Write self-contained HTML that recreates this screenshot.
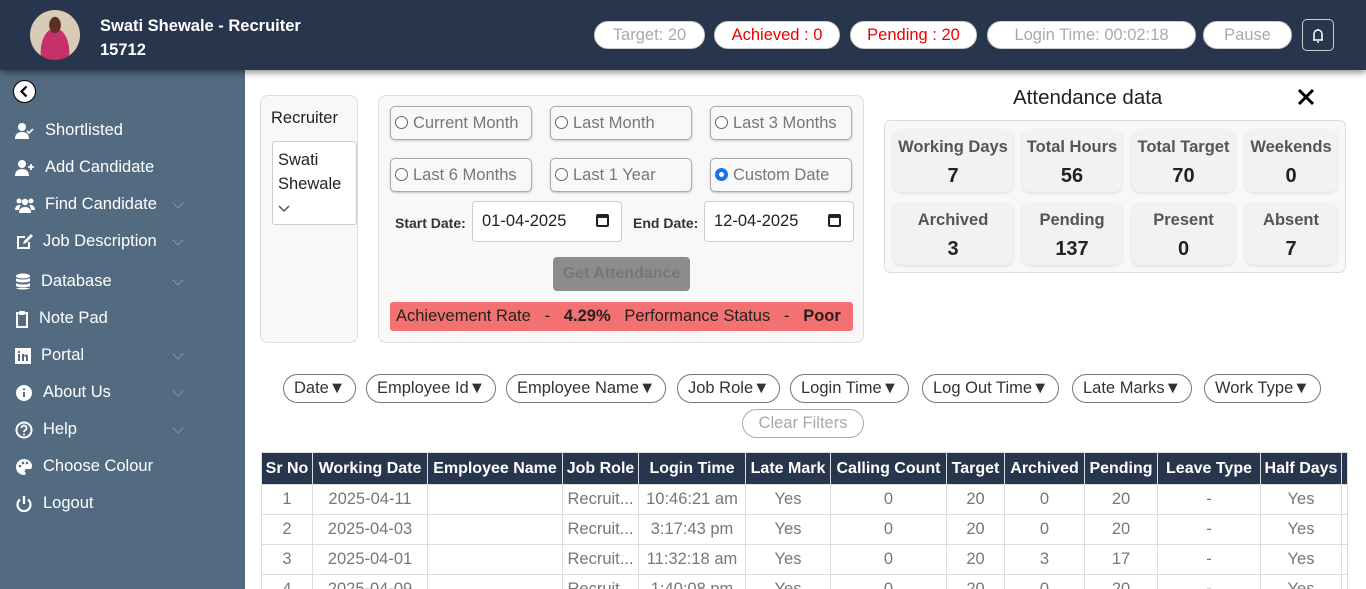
<!DOCTYPE html><html><head><style>
*{box-sizing:border-box;margin:0;padding:0}
html,body{width:1366px;height:589px;overflow:hidden}
body{font-family:"Liberation Sans",sans-serif;background:#fff;position:relative}
.a{position:absolute}
.hdr{left:0;top:0;width:1366px;height:70px;background:#28364d;box-shadow:0 3px 6px rgba(0,0,0,.4);z-index:2}
.pill{position:absolute;top:21px;height:28px;border-radius:14px;background:#fff;border:1px solid #ccc;font-size:16.5px;text-align:center;line-height:26px;color:#aaa}
.side{left:0;top:70px;width:245px;height:519px;background:#526b80}
.mi{position:absolute;left:15px;color:#fff;font-size:16.5px;display:flex;align-items:center;gap:10px}
.mi svg{width:20px;height:18px;fill:#fff}
.chev{position:absolute;left:174px;width:8px;height:8px;border-right:1.5px solid #8195a8;border-bottom:1.5px solid #8195a8;transform:rotate(45deg)}
.box{background:#f8f8f8;border:1px solid #ddd;border-radius:8px}
.rb{position:absolute;width:142px;height:34px;border:1px solid #aaa;border-radius:5px;background:#f8f8f8;font-size:16.5px;color:#777;line-height:32px;padding-left:4px;box-shadow:0 1px 2px rgba(0,0,0,.2)}
.rb span{display:inline-block;width:13px;height:13px;border:1px solid #666;border-radius:50%;vertical-align:-1px;margin-right:5px;background:#fff}
.card{position:absolute;width:120px;height:62px;background:#f1f2f4;border-radius:8px;box-shadow:0 1px 3px rgba(0,0,0,.12);text-align:center;font-weight:bold}
.card b{display:block;font-size:16.5px;color:#555;margin-top:8px}
.card em{display:block;font-style:normal;font-size:20px;color:#222;margin-top:8px}
.f{position:absolute;top:374px;height:29px;border:1px solid #777;border-radius:15px;font-size:16.5px;line-height:27px;padding:0 10px;color:#333}
table{position:absolute;left:261px;top:452px;border-collapse:collapse;font-size:16.5px}
th{background:#28364d;color:#fff;height:32px;border:1px solid #ddd;font-weight:bold;padding:0 3px;white-space:nowrap;font-size:16px}
td{height:30px;border:1px solid #ddd;text-align:center;color:#777;white-space:nowrap}
</style></head><body>
<div class="a hdr">
 <div class="a" style="left:30px;top:10px;width:50px;height:50px;border-radius:50%;background:radial-gradient(ellipse at 50% 30%,#5a3024 0 16%,transparent 17%),radial-gradient(ellipse at 50% 85%,#c8306a 0 40%,transparent 41%),#d9cbb8"></div>
 <div class="a" style="left:100px;top:14px;color:#fff;font-weight:bold;font-size:16.5px;line-height:24px">Swati Shewale - Recruiter<br>15712</div>
 <div class="pill" style="left:594px;width:111px">Target: 20</div>
 <div class="pill" style="left:714px;width:126px;color:#e00">Achieved : 0</div>
 <div class="pill" style="left:850px;width:127px;color:#e00">Pending : 20</div>
 <div class="pill" style="left:987px;width:209px">Login Time: 00:02:18</div>
 <div class="pill" style="left:1203px;width:89px">Pause</div>
 <div class="a" style="left:1302px;top:19px;width:32px;height:32px;border:1px solid #ccc;border-radius:5px"><svg width="30" height="30" viewBox="0 0 30 30" fill="none" stroke="#fff" stroke-width="1.5"><path d="M10 20h10M11 20v-6a4 4 0 0 1 8 0v6M14 22h2M15 9v1"/></svg></div>
</div>
<div class="a side">
 <div class="a" style="left:13px;top:10px;width:23px;height:23px;border-radius:50%;background:#fff;border:1px solid #000"><svg width="21" height="21" viewBox="0 0 21 21"><path d="M12.5 5.5L7.5 10.5l5 5" fill="none" stroke="#000" stroke-width="2.2"/></svg></div>
 <div class="mi" style="top:51px"><svg viewBox="0 0 20 18"><circle cx="7" cy="5" r="4"/><path d="M0 17c0-5 3-7 7-7s7 2 7 7z"/><path d="M12 9l2 2 4-4" stroke="#fff" stroke-width="1.6" fill="none"/></svg>Shortlisted</div>
 <div class="mi" style="top:88px"><svg viewBox="0 0 20 18"><circle cx="7" cy="5" r="4"/><path d="M0 17c0-5 3-7 7-7s7 2 7 7z"/><path d="M16 5v6M13 8h6" stroke="#fff" stroke-width="1.8"/></svg>Add Candidate</div>
 <div class="mi" style="top:125px"><svg viewBox="0 0 20 18"><circle cx="4" cy="5" r="2.5"/><circle cx="16" cy="5" r="2.5"/><circle cx="10" cy="6" r="3.2"/><path d="M0 14c0-3 2-5 4-5h2c-1 1-2 3-2 5zM20 14c0-3-2-5-4-5h-2c1 1 2 3 2 5zM4 17c0-4 2-6 6-6s6 2 6 6z"/></svg>Find Candidate</div><div class="chev" style="top:129px"></div>
 <div class="mi" style="top:162px"><svg viewBox="0 0 18 18" style="width:18px"><path d="M2 3h8v2H4v9h9V9h2v7H2z"/><path d="M8 11l1-3 7-7 2 2-7 7z"/></svg>Job Description</div><div class="chev" style="top:166px"></div>
 <div class="mi" style="top:202px"><svg viewBox="0 0 16 18" style="width:16px"><ellipse cx="8" cy="3" rx="7" ry="2.5"/><path d="M1 5c2 2 12 2 14 0v3c-2 2-12 2-14 0zM1 10c2 2 12 2 14 0v3c-2 2-12 2-14 0zM1 15c2 2 12 2 14 0v0"/></svg>Database</div><div class="chev" style="top:206px"></div>
 <div class="mi" style="top:239px"><svg viewBox="0 0 14 18" style="width:14px"><path d="M2 3h10v14H2z" fill="none" stroke="#fff" stroke-width="2"/><rect x="4" y="1" width="6" height="4" rx="1"/></svg>Note Pad</div>
 <div class="mi" style="top:276px"><svg viewBox="0 0 16 16" style="width:16px"><path d="M0 0h16v16H0z"/><path d="M3 6h2v7H3zM7 6h2v7H7zM9 8c0-2 4-2 4 0v5h-2V9z" fill="#526b80"/><circle cx="4" cy="4" r="1.1" fill="#526b80"/></svg>Portal</div><div class="chev" style="top:280px"></div>
 <div class="mi" style="top:313px"><svg viewBox="0 0 18 18" style="width:18px"><circle cx="9" cy="9" r="8"/><path d="M8 8h2v5H8z M9 4.2a1.1 1.1 0 1 0 .01 0" fill="#526b80"/></svg>About Us</div><div class="chev" style="top:317px"></div>
 <div class="mi" style="top:350px"><svg viewBox="0 0 18 18" style="width:18px"><circle cx="9" cy="9" r="7.5" fill="none" stroke="#fff" stroke-width="2"/><path d="M6.5 7a2.5 2.5 0 1 1 3.5 2.3c-1 .5-1 1-1 2" fill="none" stroke="#fff" stroke-width="1.8"/><circle cx="9" cy="13.5" r="1"/></svg>Help</div><div class="chev" style="top:354px"></div>
 <div class="mi" style="top:387px"><svg viewBox="0 0 18 18" style="width:18px"><path d="M9 1a8 8 0 0 0 0 16c2 0 2-2 1-3s0-3 2-3h3c2 0 2-2 2-3 0-4-4-7-8-7z"/><circle cx="5" cy="8" r="1.3" fill="#526b80"/><circle cx="8" cy="5" r="1.3" fill="#526b80"/><circle cx="12" cy="5" r="1.3" fill="#526b80"/></svg>Choose Colour</div>
 <div class="mi" style="top:424px"><svg viewBox="0 0 18 18" style="width:18px"><path d="M5 4.5a6.5 6.5 0 1 0 8 0" fill="none" stroke="#fff" stroke-width="2.2"/><path d="M9 1v8" stroke="#fff" stroke-width="2.2"/></svg>Logout</div>
</div>
<div class="a box" style="left:260px;top:95px;width:98px;height:248px">
 <div class="a" style="left:10px;top:13px;font-size:16.5px;color:#222">Recruiter</div>
 <div class="a" style="left:11px;top:45px;width:85px;height:84px;background:#fff;border:1px solid #ccc;border-radius:3px;padding:6px 5px;font-size:16.5px;line-height:24px;color:#222">Swati Shewale<br><svg width="12" height="10" viewBox="0 0 12 10"><path d="M1 3l5 5 5-5" fill="none" stroke="#555" stroke-width="1.5"/></svg></div>
</div>
<div class="a box" style="left:378px;top:95px;width:486px;height:248px">
 <div class="rb" style="left:11px;top:10px"><span></span>Current Month</div>
 <div class="rb" style="left:171px;top:10px"><span></span>Last Month</div>
 <div class="rb" style="left:331px;top:10px"><span></span>Last 3 Months</div>
 <div class="rb" style="left:11px;top:62px"><span></span>Last 6 Months</div>
 <div class="rb" style="left:171px;top:62px"><span></span>Last 1 Year</div>
 <div class="rb" style="left:331px;top:62px"><span style="border:4px solid #1a73e8"></span>Custom Date</div>
 <div class="a" style="left:16px;top:119px;font-size:14px;font-weight:bold;color:#333">Start Date:</div>
 <div class="a" style="left:93px;top:105px;width:150px;height:41px;background:#fff;border:1px solid #ccc;border-radius:4px;font-size:16.5px;line-height:39px;padding-left:9px;color:#222">01-04-2025<span style="position:absolute;right:12px;top:12px;width:13px;height:13px;border:2px solid #222;border-top-width:4px;border-radius:2px"></span></div>
 <div class="a" style="left:254px;top:119px;font-size:14px;font-weight:bold;color:#333">End Date:</div>
 <div class="a" style="left:325px;top:105px;width:150px;height:41px;background:#fff;border:1px solid #ccc;border-radius:4px;font-size:16.5px;line-height:39px;padding-left:9px;color:#222">12-04-2025<span style="position:absolute;right:12px;top:12px;width:13px;height:13px;border:2px solid #222;border-top-width:4px;border-radius:2px"></span></div>
 <div class="a" style="left:174px;top:161px;width:137px;height:34px;background:#8b8d8a;border-radius:4px;color:#777;font-weight:bold;font-size:16px;text-align:center;line-height:34px">Get Attendance</div>
 <div class="a" style="left:11px;top:206px;width:463px;height:29px;background:#f47171;border-radius:3px;font-size:16.5px;line-height:29px;padding-left:6px;color:#222;white-space:pre">Achievement Rate   -   <b>4.29%</b>   Performance Status   -   <b>Poor</b></div>
</div>
<div class="a" style="left:1013px;top:86px;font-size:20.5px;color:#222">Attendance data</div>
<div class="a" style="left:1296px;top:87px"><svg width="20" height="20" viewBox="0 0 20 20"><path d="M3 3l14 14M17 3L3 17" stroke="#000" stroke-width="3"/></svg></div>
<div class="a" style="left:884px;top:120px;width:462px;height:153px;background:#f8f8f8;border:1px solid #ddd;border-radius:6px">
 <div class="card" style="left:8px;top:9px">  <b>Working Days</b><em>7</em></div>
 <div class="card" style="left:137px;top:9px;width:100px"><b>Total Hours</b><em>56</em></div>
 <div class="card" style="left:247px;top:9px;width:103px"><b>Total Target</b><em>70</em></div>
 <div class="card" style="left:360px;top:9px;width:92px"><b>Weekends</b><em>0</em></div>
 <div class="card" style="left:8px;top:82px"><b>Archived</b><em>3</em></div>
 <div class="card" style="left:137px;top:82px;width:100px"><b>Pending</b><em>137</em></div>
 <div class="card" style="left:247px;top:82px;width:103px"><b>Present</b><em>0</em></div>
 <div class="card" style="left:360px;top:82px;width:92px"><b>Absent</b><em>7</em></div>
</div>
<div class="f" style="left:283px">Date▼</div>
<div class="f" style="left:366px">Employee Id▼</div>
<div class="f" style="left:506px">Employee Name▼</div>
<div class="f" style="left:677px">Job Role▼</div>
<div class="f" style="left:790px">Login Time▼</div>
<div class="f" style="left:922px">Log Out Time▼</div>
<div class="f" style="left:1072px">Late Marks▼</div>
<div class="f" style="left:1204px">Work Type▼</div>
<div class="f" style="left:742px;top:409px;border-color:#aaa;color:#aaa;width:122px;text-align:center">Clear Filters</div>
<table>
<tr><th style="width:51px">Sr No</th><th style="width:115px">Working Date</th><th style="width:135px">Employee Name</th><th style="width:76px">Job Role</th><th style="width:107px">Login Time</th><th style="width:85px">Late Mark</th><th style="width:116px">Calling Count</th><th style="width:58px">Target</th><th style="width:80px">Archived</th><th style="width:73px">Pending</th><th style="width:103px">Leave Type</th><th style="width:81px">Half Days</th><th style="width:6px;padding:0"></th></tr>
<tr><td>1</td><td>2025-04-11</td><td></td><td>Recruit...</td><td>10:46:21 am</td><td>Yes</td><td>0</td><td>20</td><td>0</td><td>20</td><td>-</td><td>Yes</td><td></td></tr>
<tr><td>2</td><td>2025-04-03</td><td></td><td>Recruit...</td><td>3:17:43 pm</td><td>Yes</td><td>0</td><td>20</td><td>0</td><td>20</td><td>-</td><td>Yes</td><td></td></tr>
<tr><td>3</td><td>2025-04-01</td><td></td><td>Recruit...</td><td>11:32:18 am</td><td>Yes</td><td>0</td><td>20</td><td>3</td><td>17</td><td>-</td><td>Yes</td><td></td></tr>
<tr><td>4</td><td>2025-04-09</td><td></td><td>Recruit...</td><td>1:40:08 pm</td><td>Yes</td><td>0</td><td>20</td><td>0</td><td>20</td><td>-</td><td>Yes</td><td></td></tr>
</table>
</body></html>
